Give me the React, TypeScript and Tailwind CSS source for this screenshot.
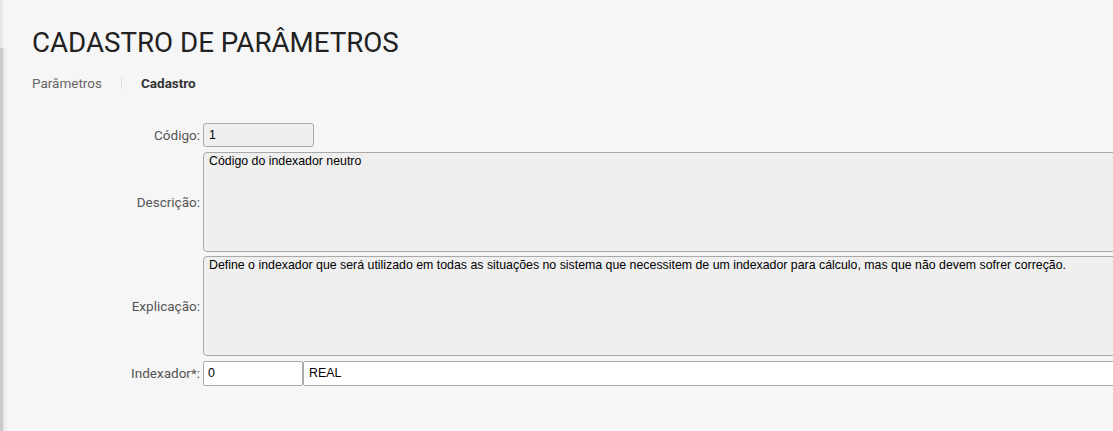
import React from "react";

export default function App() {
  const label = "text-right text-[13.5px] text-[#555] self-center pr-[3px]";
  const field = "font-['Liberation_Sans',Arial,sans-serif] text-[12.35px] text-black";
  return (
    <div className="w-[1113px] h-[431px] bg-[#f6f6f6] overflow-hidden flex font-['Roboto',sans-serif]">
      <div className="flex flex-col w-[8px] shrink-0">
        <div className="h-[48px] w-[3px] bg-[#e9e9e9]" />
        <div className="flex-1 flex">
          <div className="w-[3px] bg-[#cbcbcb]" />
          <div className="w-[5px] bg-gradient-to-r from-[#e6e6e6] to-[#f6f6f6]" />
        </div>
      </div>
      <div className="flex-1 min-w-0 pt-[26px]">
        <h1 className="pl-[24px] text-[27.7px] leading-[34px] text-[#222] font-['Roboto',sans-serif] font-normal">
          CADASTRO DE PARÂMETROS
        </h1>
        <div className="pl-[24px] mt-[14px] flex items-center text-[13.5px] h-[18px]">
          <span className="text-[#666]">Parâmetros</span>
          <span className="mx-[19px] w-px h-[11px] bg-[#ddd]" />
          <span className="text-[#333] font-bold">Cadastro</span>
        </div>
        <div className="mt-[31px] grid grid-cols-[195px_1fr] items-stretch">
          <div className={label}>Código:</div>
          <div className="flex">
            <div className={`w-[111px] h-[24px] rounded-[3px] border border-[#a9a9a9] bg-[#efefef] px-[5px] leading-[22px] ${field}`}>1</div>
          </div>

          <div className={`${label} mt-[5px]`}>Descrição:</div>
          <div className={`mt-[5px] w-[1000px] h-[100px] rounded-[4px] border border-[#a9a9a9] bg-[#efefef] px-[5px] pt-[1px] leading-[15px] ${field}`}>
            Código do indexador neutro
          </div>

          <div className={`${label} mt-[4px]`}>Explicação:</div>
          <div className={`mt-[4px] w-[1000px] h-[100px] rounded-[4px] border border-[#a9a9a9] bg-[#efefef] px-[5px] pt-[1px] leading-[15px] whitespace-nowrap ${field}`}>
            Define o indexador que será utilizado em todas as situações no sistema que necessitem de um indexador para cálculo, mas que não devem sofrer correção.
          </div>

          <div className={`${label} mt-[5px]`}>Indexador*:</div>
          <div className="mt-[5px] flex w-[1000px]">
            <div className={`w-[100px] h-[25px] rounded-[2px] border border-[#a9a9a9] bg-white px-[4px] leading-[23px] ${field}`}>0</div>
            <div className={`flex-1 h-[25px] rounded-[2px] border border-[#a9a9a9] bg-white px-[5px] leading-[23px] ${field}`}>REAL</div>
          </div>
        </div>
      </div>
    </div>
  );
}
